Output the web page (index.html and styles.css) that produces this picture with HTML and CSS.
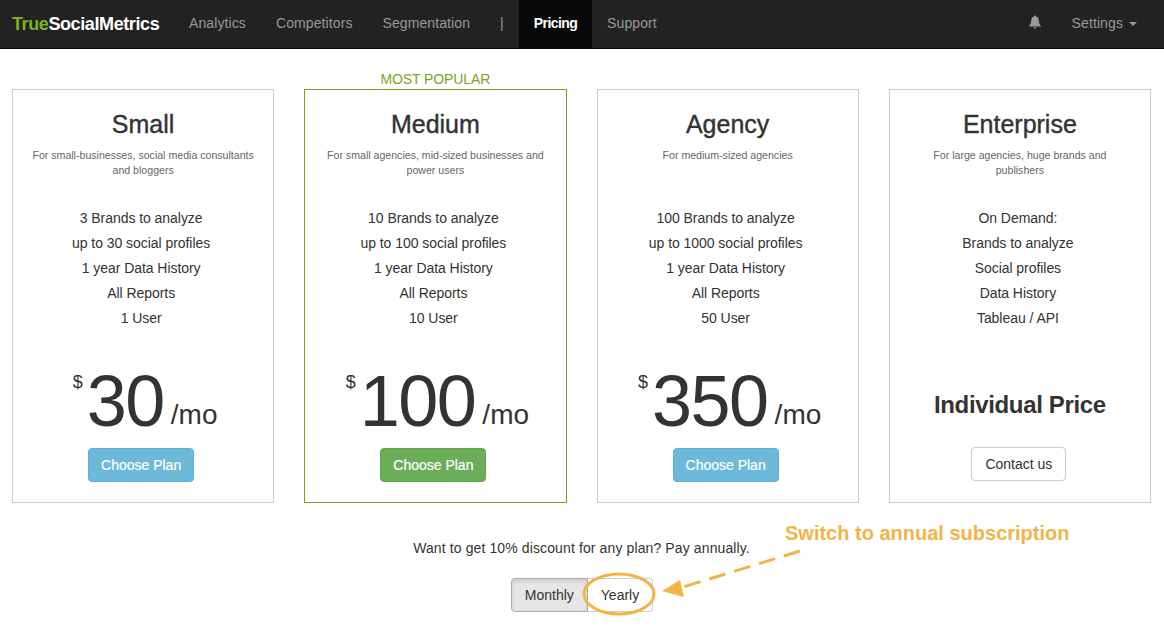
FILE: index.html
```html
<!DOCTYPE html>
<html lang="en">
<head>
    <meta charset="UTF-8">
    <title>TrueSocialMetrics Pricing</title>
    <link rel="stylesheet" href="styles.css">
</head>
<body>
    <nav class="navbar">
        <a class="brand"><span class="brand-green">True</span>SocialMetrics</a>
        <a class="nav-link">Analytics</a>
        <a class="nav-link">Competitors</a>
        <a class="nav-link">Segmentation</a>
        <span class="nav-link nav-sep">|</span>
        <a class="nav-link active">Pricing</a>
        <a class="nav-link">Support</a>
        <div class="nav-right">
            <svg class="bell" width="12" height="14" viewBox="0 0 12 14">
                <path d="M6 0.5c.6 0 1 .4 1 1 2 .5 2.8 2.2 2.8 4.2 0 2.3.7 3.6 1.9 4.8v1H.3v-1c1.200-1.200 1.900-2.500 1.900-4.800 0-2 .8-3.700 2.800-4.200 0-.6.4-1 1-1zM4.700 12.200h2.600c0 .8-.6 1.300-1.300 1.300s-1.300-.5-1.300-1.300z" fill="#999"/>
            </svg>
            <a class="nav-link settings">Settings <span class="caret"></span></a>
        </div>
    </nav>

    <div class="plans">
        <div class="plan">
            <h2>Small</h2>
            <p class="desc">For small-businesses, social media consultants and bloggers</p>
            <ul>
                <li>3 Brands to analyze</li>
                <li>up to 30 social profiles</li>
                <li>1 year Data History</li>
                <li>All Reports</li>
                <li>1 User</li>
            </ul>
            <div class="price"><sup>$</sup><b>30</b><span>/mo</span></div>
            <a class="btn btn-blue">Choose Plan</a>
        </div>
        <div class="plan popular">
            <div class="popular-label">MOST POPULAR</div>
            <h2>Medium</h2>
            <p class="desc">For small agencies, mid-sized businesses and power users</p>
            <ul>
                <li>10 Brands to analyze</li>
                <li>up to 100 social profiles</li>
                <li>1 year Data History</li>
                <li>All Reports</li>
                <li>10 User</li>
            </ul>
            <div class="price"><sup>$</sup><b>100</b><span>/mo</span></div>
            <a class="btn btn-green">Choose Plan</a>
        </div>
        <div class="plan">
            <h2>Agency</h2>
            <p class="desc">For medium-sized agencies</p>
            <ul>
                <li>100 Brands to analyze</li>
                <li>up to 1000 social profiles</li>
                <li>1 year Data History</li>
                <li>All Reports</li>
                <li>50 User</li>
            </ul>
            <div class="price"><sup>$</sup><b>350</b><span>/mo</span></div>
            <a class="btn btn-blue">Choose Plan</a>
        </div>
        <div class="plan">
            <h2>Enterprise</h2>
            <p class="desc">For large agencies, huge brands and<br>publishers</p>
            <ul>
                <li>On Demand:</li>
                <li>Brands to analyze</li>
                <li>Social profiles</li>
                <li>Data History</li>
                <li>Tableau / API</li>
            </ul>
            <div class="price individual">Individual Price</div>
            <a class="btn btn-white">Contact us</a>
        </div>
    </div>

    <div class="billing">
        <p>Want to get 10% discount for any plan? Pay annually.</p>
        <div class="toggle">
            <a class="toggle-btn on">Monthly</a>
            <a class="toggle-btn">Yearly</a>
        </div>
        <div class="note">Switch to annual subscription</div>
        <svg class="callout" width="270" height="70" viewBox="0 0 270 70">
            <ellipse cx="88" cy="44" rx="35" ry="20" fill="none" stroke="#f2b447" stroke-width="3"/>
            <line x1="269" y1="1" x2="149" y2="38" stroke="#f2b447" stroke-width="3" stroke-dasharray="17 9"/>
            <polygon points="131,41 149,30 153,47" fill="#f2b447"/>
        </svg>
    </div>
</body>
</html>
```

FILE: styles.css
```css
* {
    box-sizing: border-box;
}
html, body {
    height: 626px;
    overflow: hidden;
}
body {
    margin: 0;
    background: #fff;
    color: #333;
    font-family: "Liberation Sans", Arial, sans-serif;
    font-size: 14px;
}
.navbar {
    display: flex;
    align-items: stretch;
    height: 49px;
    background: #222;
    border-bottom: 1px solid #080808;
    padding-left: 12px;
}
.brand {
    width: 162px;
    line-height: 48px;
    color: #fff;
    font-size: 18px;
    font-weight: bold;
    letter-spacing: -0.4px;
}
.brand-green {
    color: #7db122;
}
.nav-link {
    padding: 0 15px;
    line-height: 47px;
    color: #999;
    letter-spacing: 0.1px;
}
.nav-sep {
    padding: 0 15px;
}
.active {
    padding: 0 15px;
    background: #080808;
    color: #fff;
    font-weight: bold;
    letter-spacing: -0.6px;
}
.nav-right {
    display: flex;
    align-items: flex-start;
    margin-left: auto;
    padding-right: 12px;
}
.bell {
    margin-right: 16px;
    margin-top: 15px;
}
.caret {
    display: inline-block;
    margin-left: 2px;
    vertical-align: middle;
    border-top: 4px solid #999;
    border-left: 4px solid transparent;
    border-right: 4px solid transparent;
}
.plans {
    display: grid;
    grid-template-columns: repeat(4, 1fr);
    gap: 30px;
    padding: 40px 13px 0 12px;
}
.plan {
    position: relative;
    height: 414px;
    padding: 20px 15px 0;
    border: 1px solid #ccc;
    text-align: center;
}
.popular {
    border-color: #7f9f1f;
}
.popular-label {
    position: absolute;
    top: -20px;
    left: 0;
    right: 0;
    color: #7aa329;
    font-size: 14px;
    line-height: 18px;
    letter-spacing: -0.1px;
}
h2 {
    margin: 0;
    font-size: 25px;
    font-weight: 500;
    line-height: 28px;
    -webkit-text-stroke: 0.4px #333;
}
.desc {
    height: 30px;
    margin: 10px 0 0;
    color: #666;
    font-size: 10.6px;
    line-height: 15px;
}
ul {
    margin: 28px 0 0;
    padding: 0 4px 0 0;
    list-style: none;
}
li {
    line-height: 25px;
    letter-spacing: -0.05px;
}
.price {
    display: flex;
    align-items: flex-start;
    justify-content: center;
    height: 82px;
    margin-top: 29px;
    padding-left: 4px;
    white-space: nowrap;
}
.price sup {
    margin: 12px 4px 0 0;
    font-size: 18px;
    line-height: 20px;
}
.price b {
    font-size: 72px;
    font-weight: normal;
    line-height: 82px;
    letter-spacing: -1.5px;
}
.price span {
    margin: 37px 0 0 7px;
    font-size: 28px;
    line-height: 36px;
}
.price.individual {
    align-items: center;
    padding: 8px 0 0;
    font-size: 24px;
    font-weight: bold;
    letter-spacing: -0.35px;
}
.btn {
    display: inline-block;
    margin-top: 6px;
    margin-right: 4px;
    padding: 8px 12px;
    border: 1px solid transparent;
    border-radius: 4px;
    font-size: 14px;
    line-height: 16px;
    color: #fff;
    -webkit-text-stroke: 0.2px #fff;
}
.btn-blue {
    background: #6db9d9;
    border-color: #5eb0d2;
}
.btn-green {
    background: #6cad5a;
    border-color: #64a552;
}
.btn-white {
    margin-top: 5px;
    margin-right: 2px;
    padding: 8px 13px;
    background: #fff;
    border-color: #ccc;
    color: #333;
    -webkit-text-stroke: 0;
}
.billing {
    position: relative;
    text-align: center;
}
.billing p {
    margin: 0;
    padding-top: 36px;
    padding-right: 1px;
    line-height: 18px;
    letter-spacing: 0.115px;
}
.toggle {
    display: inline-flex;
    margin-top: 21px;
}
.toggle-btn {
    padding: 8px 13px;
    border: 1px solid #ccc;
    border-left: 0;
    border-radius: 0 4px 4px 0;
    line-height: 16px;
    background: #fff;
}
.on {
    border-left: 1px solid #adadad;
    border-color: #adadad;
    border-radius: 4px 0 0 4px;
    background: #e6e6e6;
    box-shadow: inset 0 2px 4px rgba(0, 0, 0, 0.125);
}
.note {
    position: absolute;
    left: 785px;
    top: 18px;
    color: #f2b447;
    font-size: 20px;
    font-weight: bold;
    line-height: 24px;
}
.callout {
    position: absolute;
    left: 531px;
    top: 47px;
}
```
